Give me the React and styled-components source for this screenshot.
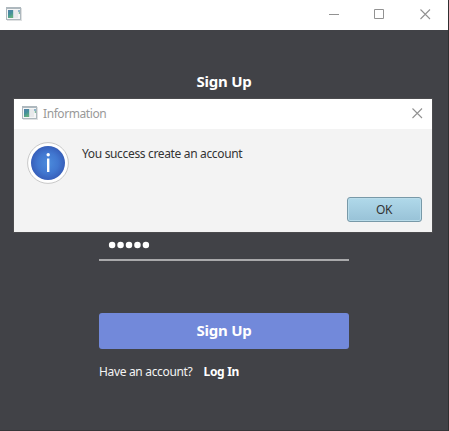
import React from "react";
import styled, { createGlobalStyle } from "styled-components";

const GlobalStyle = createGlobalStyle`
  * { box-sizing: border-box; }
  body { margin: 0; overflow: hidden; font-family: "Noto Sans", "Open Sans", sans-serif; }
  svg { display: block; }
`;

const Window = styled.main`
  position: relative;
  width: 449px;
  height: 431px;
  display: flex;
  flex-direction: column;
  background: #414247;
  border-right: 1px solid #302f31;
  border-bottom: 1px solid #363639;
`;

const TitleBar = styled.header`
  display: flex;
  align-items: center;
  height: 30px;
  flex: none;
  padding-left: ${(p) => p.$inset}px;
  background: #fff;
`;

const Caption = styled.span`
  margin-left: 4px;
  font-size: 12px;
  line-height: 16px;
  letter-spacing: -0.42px;
  color: #999;
`;

const Controls = styled.div`
  display: flex;
  align-self: flex-start;
  margin-left: auto;
`;

const ControlButton = styled.button`
  display: flex;
  align-items: center;
  justify-content: center;
  width: ${(p) => p.$width || 45}px;
  height: 29px;
  padding: 0;
  border: 0;
  background: none;
  color: #929292;
`;

const Form = styled.form`
  display: flex;
  flex-direction: column;
  width: 250px;
  margin-left: 99px;
  padding-top: 39px;
`;

const Heading = styled.h1`
  margin: 0;
  font-size: 15px;
  line-height: 24px;
  font-weight: 700;
  letter-spacing: -0.22px;
  text-align: center;
  color: #fff;
`;

const PasswordField = styled.div`
  display: flex;
  align-items: center;
  height: 34px;
  margin-top: 134px;
  padding: 3px 0 0 9px;
  border-bottom: 2px solid #a9a9ab;
  color: #fff;
`;

const SubmitButton = styled.button`
  height: 36px;
  margin-top: 52px;
  padding: 0 0 2px;
  border: 0;
  border-radius: 3px;
  background: #7289da;
  font: 700 15px/34px "Noto Sans", "Open Sans", sans-serif;
  letter-spacing: -0.22px;
  color: #fff;
`;

const Footer = styled.div`
  display: flex;
  margin-top: 14px;
  font-size: 12px;
  line-height: 18px;
  letter-spacing: -0.33px;
  color: #f4f4f4;
`;

const LoginLink = styled.a`
  margin-left: 11px;
  font-weight: 700;
  letter-spacing: -0.3px;
  color: #fff;
`;

const Dialog = styled.section`
  position: absolute;
  top: 99px;
  left: 14px;
  width: 418px;
  height: 133px;
  display: flex;
  flex-direction: column;
  background: #f3f3f3;
  box-shadow: 0 0 0 1px #4b4b4e;
`;

const Message = styled.div`
  display: flex;
  align-items: flex-start;
  padding: 12px 0 0 12px;
`;

const MessageText = styled.p`
  margin: 4px 0 0 12px;
  font-size: 12px;
  line-height: 18px;
  letter-spacing: -0.34px;
  color: #333;
`;

const DialogActions = styled.div`
  display: flex;
  justify-content: flex-end;
  margin-top: auto;
  padding: 0 10px 10px 0;
`;

const OkButton = styled.button`
  width: 75px;
  height: 25px;
  padding: 0 1px 0 0;
  border: 1px solid #7899a8;
  border-radius: 3px;
  background: linear-gradient(#b0d9ea, #98c2d7);
  box-shadow: inset 0 0 0 1px #b9dcea;
  font: 12px/22px "Noto Sans", "Open Sans", sans-serif;
  letter-spacing: -0.3px;
  color: #333;
`;

const AppIcon = () => (
  <svg width="17" height="16" viewBox="0 0 17 16">
    <defs>
      <linearGradient id="pane" x1="0" y1="0" x2="0.4" y2="1">
        <stop offset="0" stopColor="#537eaa" />
        <stop offset="0.55" stopColor="#43909a" />
        <stop offset="1" stopColor="#62ae80" />
      </linearGradient>
    </defs>
    <path d="M1 1h15v13H1z" fill="#dfe1e2" />
    <path d="M0 0h15v13H0z" fill="#aeb8be" />
    <path d="M1 2h13v10H1z" fill="#f5f6f6" />
    <path d="M2 3h5v8H2z" fill="url(#pane)" />
    <path d="M7 3h1v8H7z" fill="#cbdbe0" />
    <path d="M8 3h4v8H8z" fill="#e8e9eb" />
    <path d="M12 3h2v4h-2z" fill="#8fb4cb" />
    <path d="M12 5h1v2h-1z" fill="#d7e9df" />
    <path d="M13 5h1v2h-1z" fill="#86bca0" />
  </svg>
);

const CloseIcon = () => (
  <svg width="11" height="11" viewBox="0 0 11 11">
    <path d="M.5.5l9.5 9.5M10 .5L.5 10" stroke="currentColor" strokeWidth="1.1" />
  </svg>
);

const InfoIcon = () => (
  <svg width="44" height="44" viewBox="0 0 44 44">
    <defs>
      <radialGradient id="disc">
        <stop offset="0" stopColor="#4b8bdc" />
        <stop offset="0.6" stopColor="#4177d0" />
        <stop offset="1" stopColor="#375fba" />
      </radialGradient>
    </defs>
    <circle cx="22" cy="22" r="20.4" fill="#fff" stroke="#c9c9c9" />
    <circle cx="22" cy="22" r="17" fill="url(#disc)" />
    <circle cx="22.2" cy="13.8" r="1.7" fill="#fff" />
    <path d="M21 17.5h2.4V31H21z" fill="#fff" />
  </svg>
);

export default function App() {
  return (
    <>
      <GlobalStyle />
      <Window>
        <TitleBar $inset={6}>
          <AppIcon />
          <Controls>
            <ControlButton aria-label="Minimize">
              <svg width="13" height="1"><path d="M0 0h10v1H0z" fill="currentColor" /></svg>
            </ControlButton>
            <ControlButton aria-label="Maximize">
              <svg width="13" height="11"><path d="M.5.5h9v9h-9z" fill="none" stroke="currentColor" /></svg>
            </ControlButton>
            <ControlButton aria-label="Close"><CloseIcon /></ControlButton>
          </Controls>
        </TitleBar>
        <Form>
          <Heading>Sign Up</Heading>
          <PasswordField aria-label="Password">
            <svg width="42" height="8" fill="currentColor">
              {[0, 1, 2, 3, 4].map((i) => (
                <circle key={i} cx={4.1 + i * 8.45} cy="4" r="3.25" />
              ))}
            </svg>
          </PasswordField>
          <SubmitButton type="button">Sign Up</SubmitButton>
          <Footer>
            <span>Have an account?</span>
            <LoginLink>Log In</LoginLink>
          </Footer>
        </Form>
        <Dialog role="dialog">
          <TitleBar $inset={8}>
            <AppIcon />
            <Caption>Information</Caption>
            <Controls>
              <ControlButton $width={29} aria-label="Close dialog"><CloseIcon /></ControlButton>
            </Controls>
          </TitleBar>
          <Message>
            <InfoIcon />
            <MessageText>You success create an account</MessageText>
          </Message>
          <DialogActions>
            <OkButton>OK</OkButton>
          </DialogActions>
        </Dialog>
      </Window>
    </>
  );
}
